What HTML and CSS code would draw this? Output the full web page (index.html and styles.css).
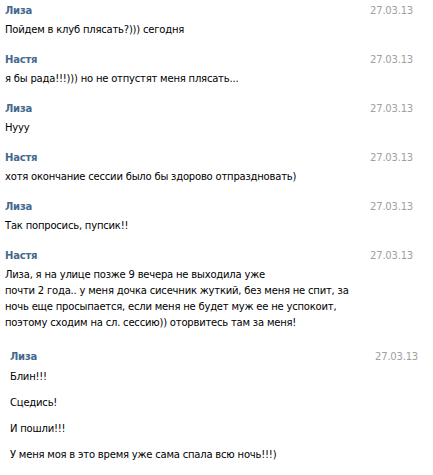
FILE: index.html
```html
<!DOCTYPE html>
<html>
<head>
<meta charset="utf-8">
<link rel="stylesheet" href="styles.css">
</head>
<body>
<div class="list">
  <div class="msg">
    <div class="head"><span class="name">Лиза</span><span class="date">27.03.13</span></div>
    <div class="text">Пойдем в клуб плясать?))) сегодня</div>
  </div>
  <div class="msg">
    <div class="head"><span class="name">Настя</span><span class="date">27.03.13</span></div>
    <div class="text">я бы рада!!!))) но не отпустят меня плясать...</div>
  </div>
  <div class="msg">
    <div class="head"><span class="name">Лиза</span><span class="date">27.03.13</span></div>
    <div class="text">Нууу</div>
  </div>
  <div class="msg">
    <div class="head"><span class="name">Настя</span><span class="date">27.03.13</span></div>
    <div class="text">хотя окончание сессии было бы здорово отпраздновать)</div>
  </div>
  <div class="msg">
    <div class="head"><span class="name">Лиза</span><span class="date">27.03.13</span></div>
    <div class="text">Так попросись, пупсик!!</div>
  </div>
  <div class="msg">
    <div class="head"><span class="name">Настя</span><span class="date">27.03.13</span></div>
    <div class="text">Лиза, я на улице позже 9 вечера не выходила уже<br>почти 2 года.. у меня дочка сисечник жуткий, без меня не спит, за<br>ночь еще просыпается, если меня не будет муж ее не успокоит,<br>поэтому сходим на сл. сессию)) оторвитесь там за меня!</div>
  </div>
  <div class="msg msg-shift">
    <div class="head"><span class="name">Лиза</span><span class="date">27.03.13</span></div>
    <p class="para">Блин!!!</p>
    <p class="para">Сцедись!</p>
    <p class="para">И пошли!!!</p>
    <p class="para">У меня моя в это время уже сама спала всю ночь!!!)</p>
  </div>
  <div class="tail">ночь...</div>
</div>
</body>
</html>
```
FILE: styles.css
```css
html, body {
  margin: 0;
  padding: 0;
  background: #fff;
}
body {
  font-family: "DejaVu Sans", Tahoma, sans-serif;
  font-size: 10px;
  letter-spacing: -0.2px;
  color: #000;
  overflow: hidden;
}
.list {
  width: 408px;
  padding-left: 5px;
}
.msg {
  padding: 3px 0 11px;
}
.head {
  display: flex;
  justify-content: space-between;
  line-height: 16px;
}
.name {
  font-weight: bold;
  color: #45688e;
}
.date {
  color: #a0a0a0;
}
.text {
  margin-top: 3px;
  line-height: 16px;
}
.msg-shift {
  margin-left: 5px;
  margin-right: -5px;
  padding-top: 7px;
  padding-bottom: 0;
}
.para {
  margin: 4px 0 10px;
  line-height: 16px;
}
.tail {
  line-height: 16px;
}
```
